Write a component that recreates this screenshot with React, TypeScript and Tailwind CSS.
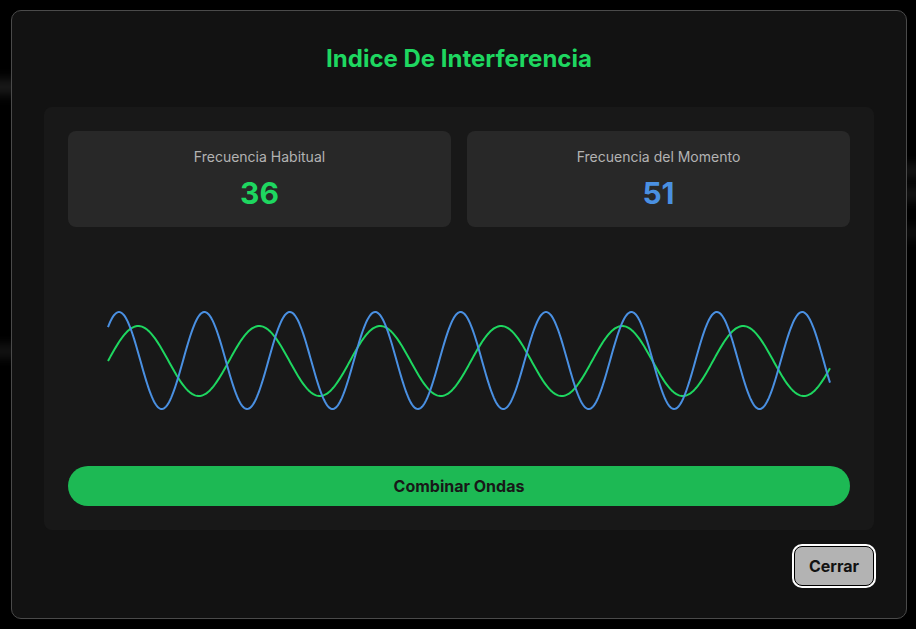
import React from "react";

function wavePath(
  x0: number,
  x1: number,
  mid: number,
  amp: number,
  period: number,
  phase: number
) {
  const pts: string[] = [];
  for (let x = x0; x <= x1; x += 1) {
    const y = mid - amp * Math.sin((2 * Math.PI * (x - x0)) / period + phase);
    pts.push(`${x === x0 ? "M" : "L"}${x.toFixed(1)},${y.toFixed(2)}`);
  }
  return pts.join(" ");
}

export default function App() {
  const green = wavePath(40, 762, 100, 35, 121, 0);
  const blue = wavePath(40, 762, 99.5, 48.5, 85.4, Math.PI / 2 - (2 * Math.PI * 11) / 85.4);
  return (
    <div
      className="relative w-full h-[629px] bg-black overflow-hidden flex items-center justify-center pl-[2px]"
      style={{ fontFamily: "Inter, 'Noto Sans', 'Liberation Sans', sans-serif" }}
    >
      <div className="absolute left-[-40px] top-[80px] w-[80px] h-[14px] bg-[#3a3a3a] blur-[6px] opacity-50" />
      <div className="absolute left-[-40px] top-[345px] w-[80px] h-[12px] bg-[#3a3a3a] blur-[6px] opacity-40" />
      <div className="absolute right-[-40px] top-[165px] w-[80px] h-[12px] bg-[#3a3a3a] blur-[6px] opacity-40" />
      <div className="absolute right-[-40px] top-[188px] w-[80px] h-[12px] bg-[#3a3a3a] blur-[6px] opacity-40" />
      <div className="absolute right-[-40px] top-[228px] w-[80px] h-[10px] bg-[#3a3a3a] blur-[6px] opacity-30" />

      <div className="relative w-[896px] rounded-[10px] border border-[#4a4a4a] bg-[#121212] p-8 flex flex-col">
        <h1 className="text-center text-2xl leading-8 font-bold text-[#1ed760]">
          Indice De Interferencia
        </h1>
        <div className="mt-8 rounded-lg bg-[#181818] p-6 flex flex-col">
          <div className="grid grid-cols-2 gap-4">
            <div className="rounded-lg bg-[#282828] p-4 flex flex-col items-center h-[96px]">
              <div className="text-sm leading-5 text-[#b3b3b3]">Frecuencia Habitual</div>
              <div className="mt-2 text-3xl leading-9 font-bold text-[#1ed760]">36</div>
            </div>
            <div className="rounded-lg bg-[#282828] p-4 flex flex-col items-center h-[96px]">
              <div className="text-sm leading-5 text-[#b3b3b3]">Frecuencia del Momento</div>
              <div className="mt-2 text-3xl leading-9 font-bold text-[#4a90e2]">51</div>
            </div>
          </div>
          <div className="mt-[34px] h-[200px]">
            <svg width="782" height="200" viewBox="0 0 782 200">
              <path d={green} fill="none" stroke="#1ed760" strokeWidth="2" />
              <path d={blue} fill="none" stroke="#4a90e2" strokeWidth="2" />
            </svg>
          </div>
          <button className="mt-[5px] h-10 w-full rounded-full bg-[#1db954] text-base font-bold text-[#181818]">
            Combinar Ondas
          </button>
        </div>
        <div className="mt-4 flex justify-end">
          <button className="h-[40px] w-[80px] rounded-lg border border-black bg-[#b3b3b3] text-base font-bold text-[#121212] ring-2 ring-white">
            Cerrar
          </button>
        </div>
      </div>
    </div>
  );
}
